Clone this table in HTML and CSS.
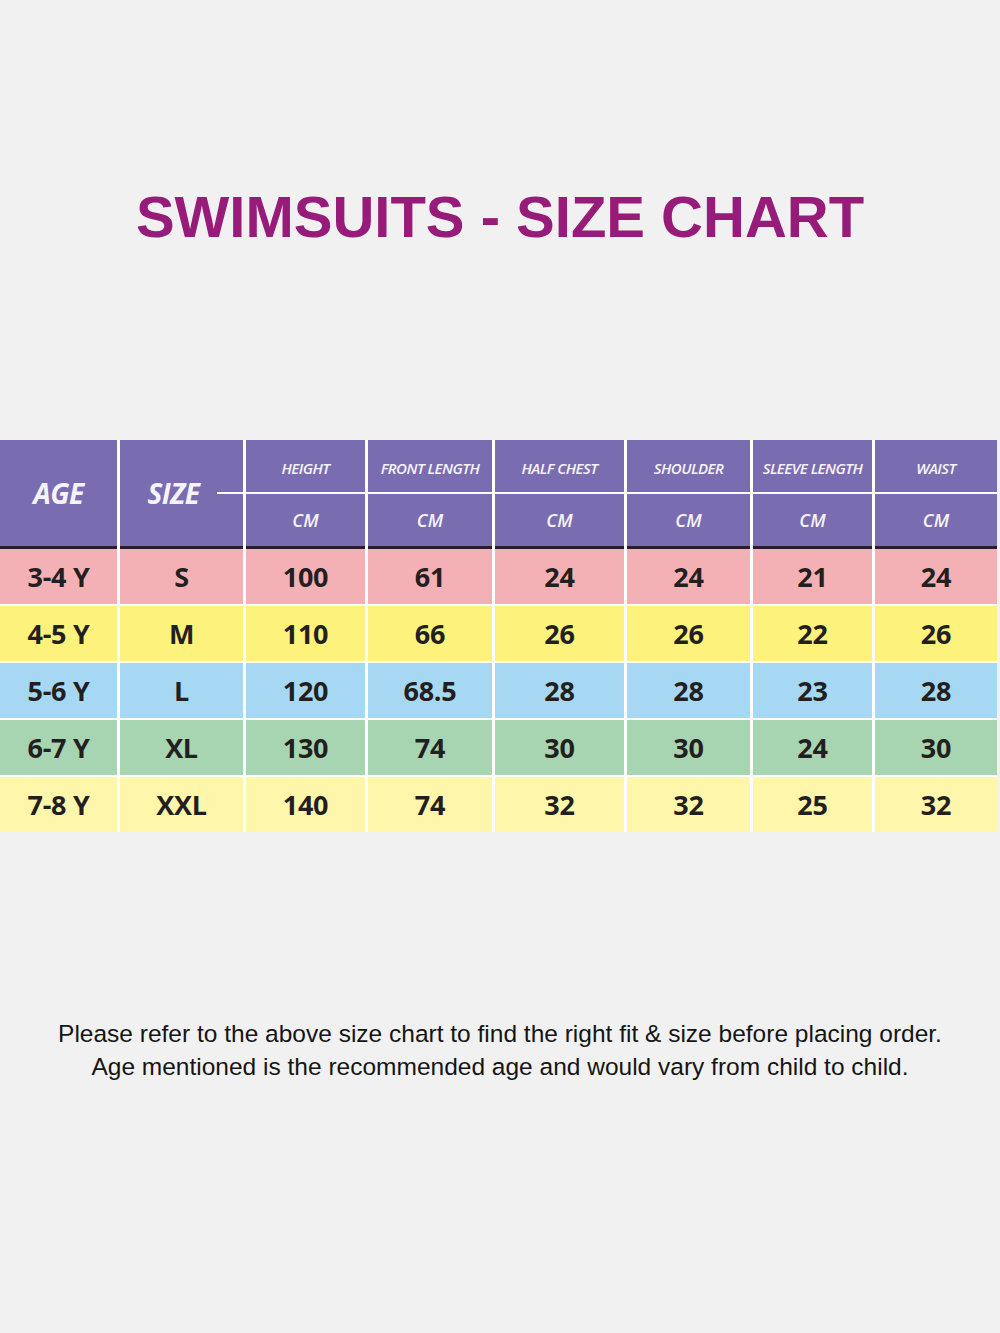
FILE: index.html
```html
<!DOCTYPE html>
<html lang="en">
<head>
<meta charset="utf-8">
<title>Swimsuits - Size Chart</title>
<link rel="stylesheet" href="styles.css">
</head>
<body>
<main class="page">
  <h1 class="title">SWIMSUITS - SIZE CHART</h1>

  <section class="chart">
    <div class="head">
      <div class="hcell big span2">AGE</div>
      <div class="hcell big span2 size">SIZE</div>
      <div class="hcell label">HEIGHT</div>
      <div class="hcell label">FRONT LENGTH</div>
      <div class="hcell label">HALF CHEST</div>
      <div class="hcell label">SHOULDER</div>
      <div class="hcell label">SLEEVE LENGTH</div>
      <div class="hcell label">WAIST</div>
      <div class="hcell unit">CM</div>
      <div class="hcell unit">CM</div>
      <div class="hcell unit">CM</div>
      <div class="hcell unit">CM</div>
      <div class="hcell unit">CM</div>
      <div class="hcell unit">CM</div>
    </div>

    <div class="body">
      <div class="row pink"><span>3-4 Y</span><span>S</span><span>100</span><span>61</span><span>24</span><span>24</span><span>21</span><span>24</span></div>
      <div class="row yellow"><span>4-5 Y</span><span>M</span><span>110</span><span>66</span><span>26</span><span>26</span><span>22</span><span>26</span></div>
      <div class="row blue"><span>5-6 Y</span><span>L</span><span>120</span><span>68.5</span><span>28</span><span>28</span><span>23</span><span>28</span></div>
      <div class="row green"><span>6-7 Y</span><span>XL</span><span>130</span><span>74</span><span>30</span><span>30</span><span>24</span><span>30</span></div>
      <div class="row cream"><span>7-8 Y</span><span>XXL</span><span>140</span><span>74</span><span>32</span><span>32</span><span>25</span><span>32</span></div>
    </div>
  </section>

  <p class="note">Please refer to the above size chart to find the right fit &amp; size before placing order.<br>Age mentioned is the recommended age and would vary from child to child.</p>
</main>
</body>
</html>
```

FILE: styles.css
```css
* { box-sizing: border-box; }

html, body {
  margin: 0;
  padding: 0;
  background: #f1f1f1;
}

.page {
  width: 1000px;
  height: 1333px;
  padding-top: 188px;
}

.title {
  margin: 0;
  font-family: "Liberation Sans", Arial, sans-serif;
  font-weight: 700;
  font-size: 58px;
  line-height: 58px;
  color: #971b79;
  text-align: center;
}

.chart {
  margin-top: 194px;
  width: 997px;
  font-family: "Open Sans", "Lato", sans-serif;
}

.head,
.row {
  display: grid;
  grid-template-columns: 117px 123px 119px 124px 129px 123px 119px 122px;
  column-gap: 3px;
}

.head {
  grid-template-rows: 52px 55px;
  row-gap: 2px;
  background: #ffffff;
}

.hcell {
  background: #7a6cb0;
  color: #f6f4fb;
  font-style: italic;
  font-weight: 700;
  display: flex;
  align-items: center;
  justify-content: center;
}

.span2 {
  grid-row: span 2;
  border-bottom: 3px solid #2a1c2c;
  position: relative;
}

.big {
  font-size: 28px;
  letter-spacing: -0.5px;
}

.size {
  padding-right: 16px;
}

.size::after {
  content: "";
  position: absolute;
  right: 0;
  top: 52px;
  width: 26px;
  height: 2px;
  background: #ffffff;
}

.label {
  font-size: 15px;
  font-weight: 600;
  letter-spacing: -0.5px;
  padding-top: 4px;
}

.unit {
  font-size: 18px;
  font-weight: 600;
  border-bottom: 3px solid #2a1c2c;
}

.body {
  display: flex;
  flex-direction: column;
  gap: 2px;
  background: #ffffff;
}

.row {
  height: 55px;
  background: #ffffff;
}

.row span {
  display: flex;
  align-items: center;
  justify-content: center;
  font-weight: 700;
  font-size: 27px;
  color: #231f20;
  letter-spacing: -0.3px;
}

.pink span { background: #f4b1b5; }
.yellow span { background: #fdf27c; }
.blue span { background: #a6d8f3; }
.green span { background: #a8d5b1; }
.cream span { background: #fef6aa; }

.note {
  margin: 185px 0 0;
  font-family: "Liberation Sans", Arial, sans-serif;
  font-size: 24.5px;
  line-height: 33px;
  color: #151515;
  text-align: center;
}
```
